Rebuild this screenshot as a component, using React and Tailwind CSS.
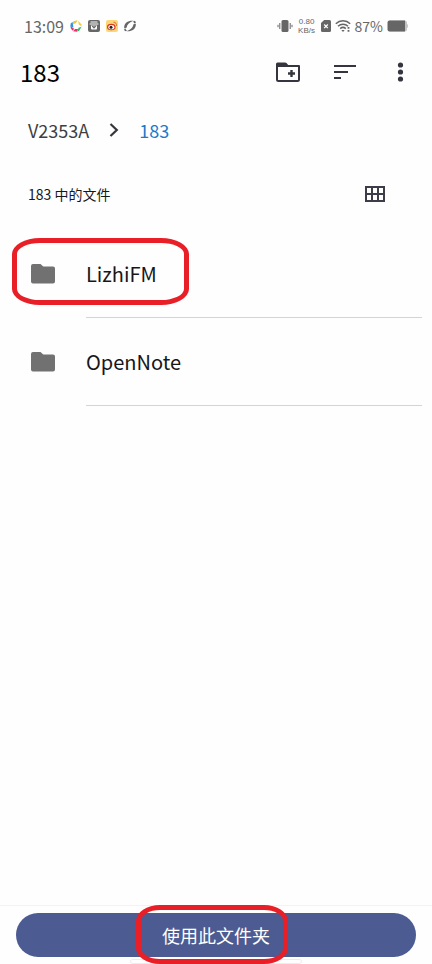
import React from 'react';

const folders = [
  { name: 'LizhiFM', marked: true },
  { name: 'OpenNote', marked: false },
];

function StatusBar() {
  return (
    <div className="flex h-12 items-center justify-between pt-1 pr-6 pl-6 text-[#666]">
      <div className="flex items-center gap-1.5">
        <span className="text-base leading-5">13:09</span>
        {/* color ring */}
        <svg className="h-3 w-3" viewBox="0 0 12 12">
          <path d="M3.500 1.200 7.500.2 6 3 2.500 4.500Z" fill="#f3c526" />
          <path d="M8 .6 11.500 4.500 11.300 6.500 8.800 4.200Z" fill="#f0cf3c" />
          <path d="M11.600 6.800 9 11 7.200 11.500 8.600 7.800Z" fill="#35b56a" />
          <path d="M8 9 7 11.800 3 11.300 5 9Z" fill="#e5356c" />
          <path d="M2.600 10.700.6 8 .8 6.500 4.200 8.800Z" fill="#e5356c" />
          <path d="M.2 6.600.8 3.500 2.500 1.800 3.400 7.500Z" fill="#2f93dc" />
        </svg>
        {/* archive box */}
        <svg className="h-3 w-3" viewBox="0 0 12 12">
          <rect width="12" height="12" rx="2" fill="#666" />
          <path d="M2.500 2h7M1.500 4h9" stroke="#fff" strokeWidth="1" />
          <path d="M3 5.500v3a1 1 0 0 0 1 1h4a1 1 0 0 0 1-1v-3Z" fill="#fff" />
          <path d="M4.300 6 6 7.800 7.700 6" stroke="#666" fill="none" strokeWidth="1.300" />
        </svg>
        {/* weibo */}
        <svg className="h-3 w-3" viewBox="0 0 12 12">
          <rect width="12" height="12" rx="2" fill="#fbd778" />
          <ellipse cx="5.300" cy="7" rx="4.300" ry="3.200" fill="#d83a2b" />
          <ellipse cx="5.300" cy="7.200" rx="3" ry="2.100" fill="#fff" />
          <circle cx="5" cy="7.300" r="1.500" fill="#222" />
          <path d="M7.500 2.200a3 3 0 0 1 3 3.600" stroke="#d8632b" fill="none" strokeWidth="1" />
        </svg>
        {/* swirl */}
        <svg className="h-3 w-3" viewBox="0 0 12 12" fill="#666">
          <path d="M.2 8.200C-.2 3.500 3.500.4 9.500.8 5.500 2.200 3.200 4.200 2.500 7.800Z" />
          <path d="M11.800 3.800c.4 4.700-3.300 7.800-9.300 7.400 4-1.400 6.300-3.400 7-7Z" />
          <path d="M10 .8c1.200 0 1.800.7 1.800 2.200l-1.600.6c0-1-.3-1.500-1.200-1.700Z" />
          <path d="M2 11.200C.8 11.200.2 10.500.2 9l1.600-.6c0 1 .3 1.500 1.200 1.700Z" />
        </svg>
      </div>

      <div className="flex items-center gap-1">
        {/* vibrate */}
        <svg className="h-3 w-4" viewBox="0 0 16 12" fill="#666">
          <rect x="4.500" width="7" height="12" rx="1.500" />
          <path d="M2.800 3v6M13.200 3v6M1 4.800v2.400M15 4.800v2.400" stroke="#666" strokeWidth="1" />
        </svg>
        <div className="flex w-5 flex-col items-center font-['Liberation_Sans',sans-serif] text-[8px] leading-[9px]">
          <span>0.80</span>
          <span>KB/s</span>
        </div>
        {/* sim card */}
        <svg className="h-3 w-[10px]" viewBox="0 0 10 12">
          <path d="M3.200 0H8.500A1.500 1.500 0 0 1 10 1.500v9A1.500 1.500 0 0 1 8.500 12h-7A1.500 1.500 0 0 1 0 10.500V3Z" fill="#666" />
          <path d="m3.200 4.500 3.600 3.600m0-3.600L3.200 8.100" stroke="#fff" strokeWidth="1.300" />
        </svg>
        {/* wifi */}
        <svg className="h-3 w-4" viewBox="0 0 16 12" fill="none" stroke="#666" strokeWidth="1.500">
          <path d="M.8 3.700c4-3.800 10.400-3.800 14.400 0" />
          <path d="M3 6.200c2.800-2.600 7.200-2.600 10 0" />
          <path d="M5.200 8.600c1.600-1.400 4-1.400 5.600 0" />
          <path d="m6.300 10 1.700 2 1.700-2Z" fill="#666" stroke="none" />
          <path d="M13.500 7v1.800M13.500 10v1.800" strokeWidth="1.800" />
        </svg>
        <span className="text-sm leading-5">87%</span>
        {/* battery */}
        <svg className="h-3 w-[21px]" viewBox="0 0 21 12">
          <rect x="1" y=".5" width="19" height="11" rx="2.500" fill="#c4c4c4" />
          <path d="M20 4c1.300.5 1.300 3.500 0 4Z" fill="#c4c4c4" />
          <path d="M2.500.5H18v11H2.500A2 2 0 0 1 .5 9.500v-7a2 2 0 0 1 2-2Z" fill="#666" />
        </svg>
      </div>
    </div>
  );
}

function Header() {
  return (
    <header className="flex h-12 items-center justify-between pr-5 pl-5">
      <h1 className="text-2xl leading-8 text-black">183</h1>
      <div className="flex items-center gap-8 text-[#35353f]">
        <button type="button" aria-label="新建文件夹">
          <svg className="h-5 w-6" viewBox="0 0 24 20" fill="none" stroke="currentColor" strokeWidth="2">
            <path d="M1 17.500V4h22v13.500a1.500 1.500 0 0 1-1.500 1.500h-19A1.500 1.500 0 0 1 1 17.500Z" strokeLinejoin="round" />
            <path d="M0 5V2A1.500 1.500 0 0 1 1.500.5H9a2 2 0 0 1 1.500.6L13 4v1Z" fill="currentColor" stroke="none" />
            <path d="M15.500 8v7M12 11.500h7" strokeWidth="2.400" />
          </svg>
        </button>
        <button type="button" aria-label="排序">
          <svg className="h-5 w-6" viewBox="0 0 24 20" stroke="currentColor" strokeWidth="2">
            <path d="M2 4h22M2 10h14M2 16h7" />
          </svg>
        </button>
        <button type="button" aria-label="更多选项" className="flex w-6 justify-center">
          <svg className="h-5 w-2" viewBox="0 0 8 20" fill="currentColor">
            <circle cx="4.500" cy="3" r="2.600" />
            <circle cx="4.500" cy="10" r="2.600" />
            <circle cx="4.500" cy="17" r="2.600" />
          </svg>
        </button>
      </div>
    </header>
  );
}

function FolderRow({ name, marked }) {
  return (
    <li className="relative">
      <a href="#" className="flex h-22 items-center pl-[30px]">
        <svg className="h-5 w-[26px] shrink-0" viewBox="0 0 26 20" fill="#717171">
          <path d="M3 0h7.500l2.800 2.500H23A2 2 0 0 1 25 4.500v13A2 2 0 0 1 23 19.500H3A2 2 0 0 1 1 17.500V2A2 2 0 0 1 3 0Z" />
        </svg>
        <span className="mr-[10px] ml-[30px] flex h-full flex-1 items-center border-b border-[#d4d4d4] text-xl text-[#17171a]">
          {name}
        </span>
      </a>
      {/* 红色标注框 */}
      {marked && (
        <div className="pointer-events-none absolute top-2 left-3 h-[67px] w-[177px] rounded-[28px/16px] border-5 border-[#e81f27]"></div>
      )}
    </li>
  );
}

export default function App() {
  return (
    <div className="flex min-h-screen flex-col bg-[#fefefe] font-['Noto_Sans_CJK_SC',sans-serif]">
      <StatusBar />
      <Header />

      <nav className="flex h-[68px] items-center gap-5 pl-7 text-lg leading-6">
        <a href="#" className="text-[#3d3d42]">V2353A</a>
        <svg className="h-3.5 w-2.5" viewBox="0 0 10 14" fill="none" stroke="#35353b" strokeWidth="2.200">
          <path d="m1.500 1 6.300 6-6.300 6" />
        </svg>
        <a href="#" className="text-[#2079c7]">183</a>
      </nav>

      <main className="flex-1">
        <div className="flex h-[66px] items-center justify-between pr-[46px] pb-1.5 pl-7">
          <h2 className="text-sm text-[#17171a]">183 中的文件</h2>
          <button type="button" aria-label="网格视图">
            <svg className="h-4 w-[22px]" viewBox="0 0 22 16" fill="none" stroke="#3d3d49" strokeWidth="2">
              <path d="M2 1h18v14H2ZM8 1v14M14 1v14M2 8h18" />
            </svg>
          </button>
        </div>
        <ul>
          {folders.map((folder) => (
            <FolderRow key={folder.name} name={folder.name} marked={folder.marked} />
          ))}
        </ul>
      </main>

      <footer className="relative border-t border-[#f3f3f3] px-4 pt-[7px] pb-[7px]">
        <button type="button" className="h-11 w-full rounded-full bg-[#4c5b92] text-lg text-white">
          使用此文件夹
        </button>
        {/* 手势导航条 */}
        <div className="absolute bottom-0 left-1/2 h-[5px] w-[172px] -translate-x-1/2 rounded-sm border border-[#f3e9ec]"></div>
        {/* 红色标注框 */}
        <div className="pointer-events-none absolute bottom-0 left-1/2 h-[59px] w-[152px] -ml-20 rounded-[24px/16px] border-5 border-[#e81f27]"></div>
      </footer>
    </div>
  );
}
